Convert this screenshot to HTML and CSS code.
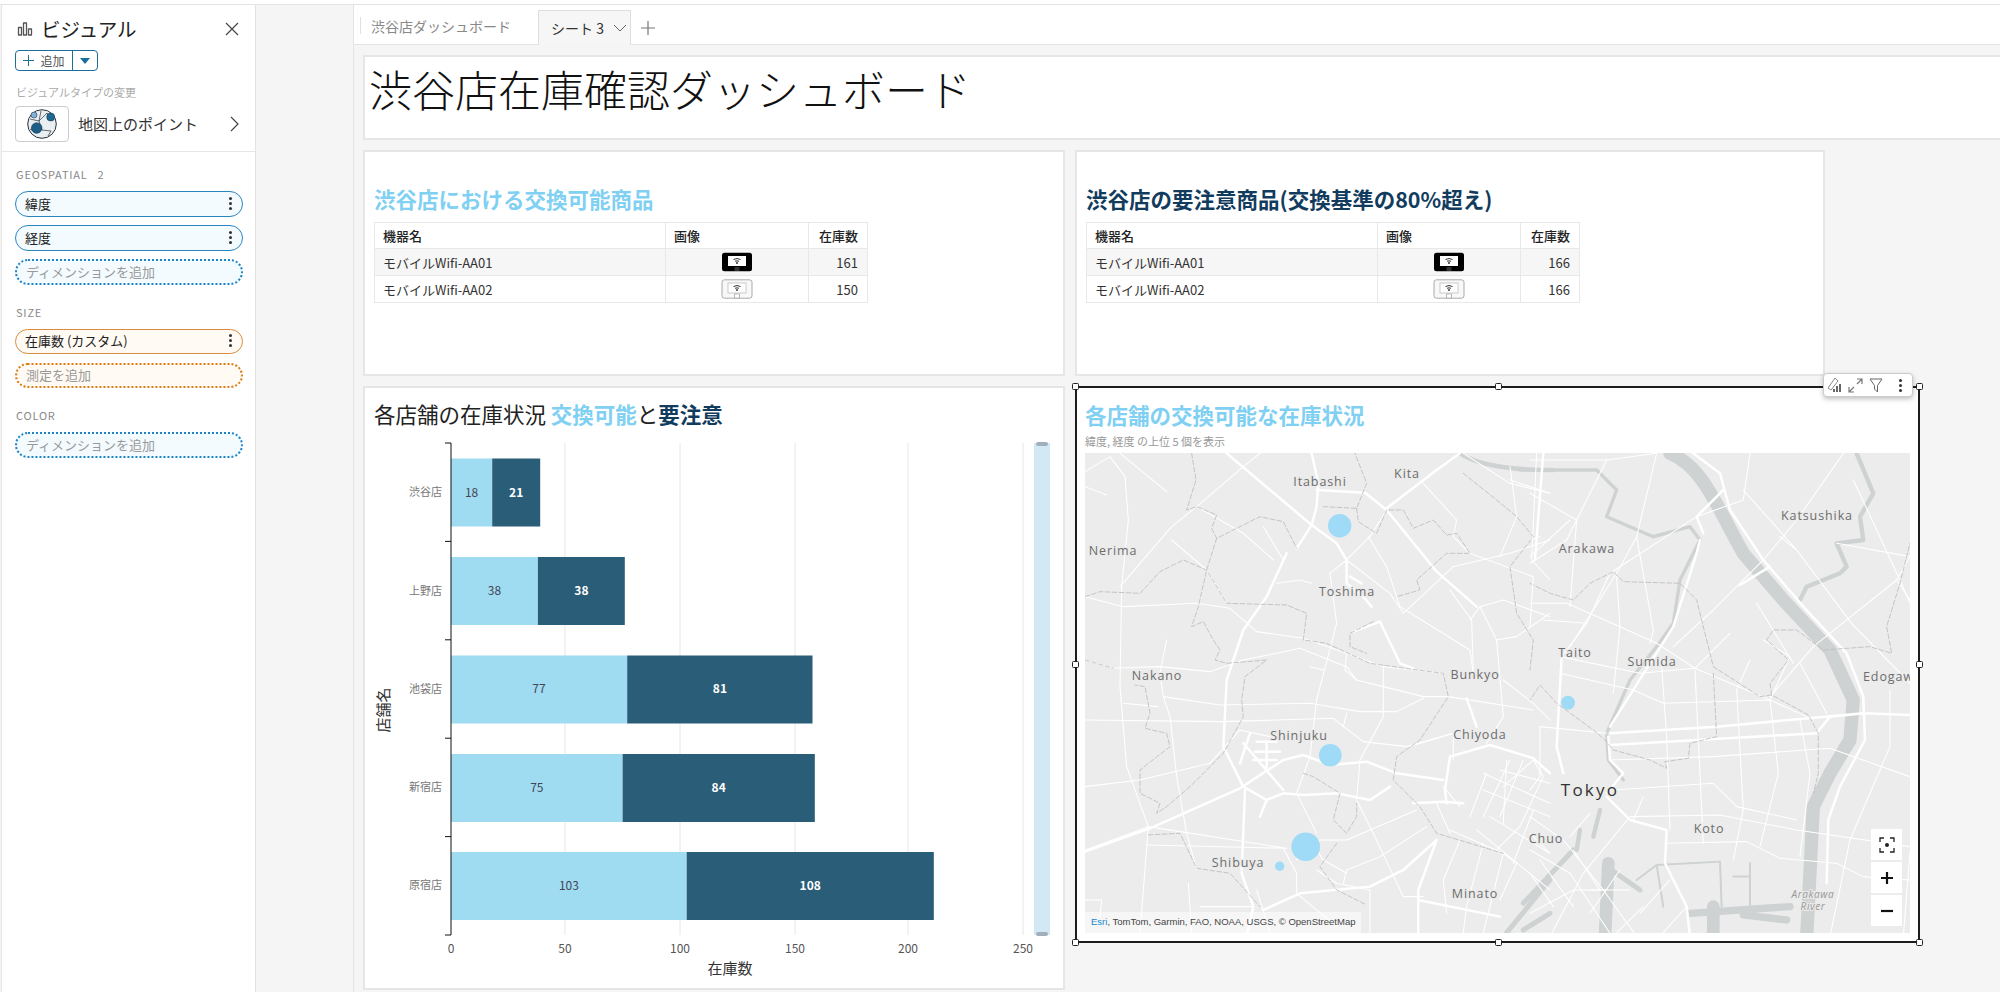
FILE: index.html
```html
<!DOCTYPE html>
<html lang="ja">
<head>
<meta charset="utf-8">
<title>渋谷店在庫確認ダッシュボード</title>
<link rel="stylesheet" href="styles.css">
</head>
<body>
<svg class="defs" width="0" height="0">
  <symbol id="device" viewBox="0 0 32 20">
    <rect x="1" y="0.8" width="30" height="18.4" rx="2.5" class="dev-body"/>
    <rect x="7" y="4" width="18" height="10" class="dev-screen"/>
    <path d="M12.5 7.5q3.5-2 7 0M14 9.3q2-1 4 0" fill="none" stroke="#333" stroke-width="1"/>
    <circle cx="16" cy="11" r="1" fill="#333"/>
    <rect x="13.5" y="15" width="5" height="4" class="dev-foot"/>
  </symbol>
</svg>
<div class="topline"></div>
<div class="app">
  <aside class="side">
    <div class="side-head">
      <svg class="ic-bars" width="16" height="14" viewBox="0 0 16 14"><path d="M1.5 5.5h3v7.500h-3zM6.500 1h3v12h-3zM11.500 7h3v6h-3z" fill="none" stroke="#555" stroke-width="1.300" stroke-linejoin="round"/></svg>
      <h2 class="side-title">ビジュアル</h2>
      <svg class="ic-close" width="14" height="14" viewBox="0 0 14 14"><path d="M1 1l12 12M13 1L1 13" stroke="#444" stroke-width="1.200"/></svg>
    </div>
    <div class="add-btn">
      <span class="add-main"><svg width="11" height="11" viewBox="0 0 11 11"><path d="M5.500 0v11M0 5.500h11" stroke="#1b6d9c" stroke-width="1"/></svg>追加</span>
      <span class="add-caret"><i></i></span>
    </div>
    <div class="side-label">ビジュアルタイプの変更</div>
    <div class="type-row">
      <span class="type-thumb">
        <svg width="32" height="32" viewBox="0 0 32 32">
          <circle cx="16" cy="16" r="14.300" fill="#e8eef1" stroke="#2b3138" stroke-width="1"/>
          <path d="M4 11l9 2 8-8M13 13l3 9 9 1M4 21l7 4M21 5l6 8M15 3l-2 10M25 23l-3 5" stroke="#2b3138" stroke-width=".7" fill="none"/>
          <circle cx="24.700" cy="9" r="4" fill="#1f6a94" stroke="#123" stroke-width=".5"/>
          <circle cx="10.700" cy="20" r="5.300" fill="#1b5e87" stroke="#123" stroke-width=".5"/>
          <circle cx="8" cy="7" r="3" fill="#7fb2d5" stroke="#335" stroke-width=".6"/>
        </svg>
      </span>
      <span class="type-name">地図上のポイント</span>
      <svg class="ic-chev" width="9" height="16" viewBox="0 0 9 16"><path d="M1 1l7 7-7 7" fill="none" stroke="#444" stroke-width="1.200"/></svg>
    </div>
    <div class="wells">
      <div class="well-label first">GEOSPATIAL&nbsp;&nbsp; 2</div>
      <div class="pill blue"><span>緯度</span><i class="kebab"></i></div>
      <div class="pill blue"><span>経度</span><i class="kebab"></i></div>
      <div class="pill blue dotted"><span>ディメンションを追加</span></div>
      <div class="well-label">SIZE</div>
      <div class="pill orange"><span>在庫数 (カスタム)</span><i class="kebab"></i></div>
      <div class="pill orange dotted"><span>測定を追加</span></div>
      <div class="well-label">COLOR</div>
      <div class="pill blue dotted"><span>ディメンションを追加</span></div>
    </div>
  </aside>
  <div class="gutter"></div>
  <main class="main">
    <nav class="tabs">
      <div class="tab">渋谷店ダッシュボード</div>
      <div class="tab active">シート 3
        <svg width="14" height="8" viewBox="0 0 14 8"><path d="M1 1l6 6 6-6" fill="none" stroke="#666" stroke-width="1"/></svg>
      </div>
      <svg class="tab-plus" width="16" height="16" viewBox="0 0 16 16"><path d="M8 1v14M1 8h14" stroke="#777" stroke-width="1.200"/></svg>
    </nav>
    <div class="sheet">
      <section class="card title-card"><h1>渋谷店在庫確認ダッシュボード</h1></section>
      <div class="row row-tables">
        <section class="card table-card w1">
          <h3 class="vt light">渋谷店における交換可能商品</h3>
          <table class="tbl">
            <colgroup><col class="c1"><col class="c2"><col class="c3"></colgroup>
            <tr><th>機器名</th><th>画像</th><th class="num">在庫数</th></tr>
            <tr class="alt"><td>モバイルWifi-AA01</td><td class="img"><svg class="dev dark" width="32" height="20"><use href="#device"/></svg></td><td class="num">161</td></tr>
            <tr><td>モバイルWifi-AA02</td><td class="img"><svg class="dev pale" width="32" height="20"><use href="#device"/></svg></td><td class="num">150</td></tr>
          </table>
        </section>
        <section class="card table-card w2">
          <h3 class="vt navy">渋谷店の要注意商品(交換基準の80%超え)</h3>
          <table class="tbl">
            <colgroup><col class="c1"><col class="c2"><col class="c3"></colgroup>
            <tr><th>機器名</th><th>画像</th><th class="num">在庫数</th></tr>
            <tr class="alt"><td>モバイルWifi-AA01</td><td class="img"><svg class="dev dark" width="32" height="20"><use href="#device"/></svg></td><td class="num">166</td></tr>
            <tr><td>モバイルWifi-AA02</td><td class="img"><svg class="dev pale" width="32" height="20"><use href="#device"/></svg></td><td class="num">166</td></tr>
          </table>
        </section>
      </div>
      <div class="row row-bottom">
        <section class="card chart-card w1">
          <h3 class="vt ink">各店舗の在庫状況 <b class="light">交換可能</b>と<b class="navy">要注意</b></h3>
          <svg class="chart" width="698" height="558" viewBox="365 430 698 558">
            <g class="grid">
              <path d="M565 443V935M680 443V935M795 443V935M908 443V935M1023 443V935"/>
            </g>
            <g class="lt">
              <rect x="451" y="458.500" width="41.200" height="68"/>
              <rect x="451" y="557" width="86.900" height="68"/>
              <rect x="451" y="655.500" width="176.200" height="68"/>
              <rect x="451" y="754" width="171.600" height="68"/>
              <rect x="451" y="852" width="235.700" height="68"/>
            </g>
            <g class="dk">
              <rect x="492.200" y="458.500" width="48" height="68"/>
              <rect x="537.900" y="557" width="86.900" height="68"/>
              <rect x="627.200" y="655.500" width="185.300" height="68"/>
              <rect x="622.600" y="754" width="192.200" height="68"/>
              <rect x="686.700" y="852" width="247.100" height="68"/>
            </g>
            <path class="axis" d="M451 443V935M445 443h6M445 541.400h6M445 639.800h6M445 738.200h6M445 836.600h6M445 935h6"/>
            <g class="cat">
              <text x="442" y="496">渋谷店</text>
              <text x="442" y="595">上野店</text>
              <text x="442" y="693">池袋店</text>
              <text x="442" y="791">新宿店</text>
              <text x="442" y="889">原宿店</text>
            </g>
            <g class="val">
              <text x="471.600" y="497">18</text>
              <text x="494.500" y="595">38</text>
              <text x="539" y="693">77</text>
              <text x="536.800" y="792">75</text>
              <text x="568.900" y="890">103</text>
            </g>
            <g class="val on-dark">
              <text x="516.200" y="497">21</text>
              <text x="581.400" y="595">38</text>
              <text x="719.900" y="693">81</text>
              <text x="718.700" y="792">84</text>
              <text x="810.200" y="890">108</text>
            </g>
            <g class="tick">
              <text x="451" y="953">0</text>
              <text x="565" y="953">50</text>
              <text x="680" y="953">100</text>
              <text x="795" y="953">150</text>
              <text x="908" y="953">200</text>
              <text x="1023" y="953">250</text>
            </g>
            <text class="ax-title" x="730" y="974">在庫数</text>
            <text class="ax-title" transform="translate(389 710) rotate(-90)">店舗名</text>
            <rect class="scroll" x="1034" y="443" width="16" height="492"/>
            <rect class="grip" x="1036" y="442" width="12" height="4" rx="2"/>
            <rect class="grip" x="1036" y="932" width="12" height="4" rx="2"/>
          </svg>
        </section>
        <section class="card map-card">
          <h3 class="vt light">各店舗の交換可能な在庫状況</h3>
          <p class="sub">緯度, 経度 の上位 5 個を表示</p>
          <div class="map">
            <svg class="map-svg" width="825" height="480" viewBox="0 0 825 480">
              <rect width="825" height="480" fill="#ececec"/>
              <g transform="translate(445 -13) scale(.3333)">
                <g class="water">
                  <path class="w40" d="M420 40C520 80 560 200 640 340L760 480L900 630L970 780L960 900L900 1000L850 1100L840 1300L830 1490"/>
                  <path class="w12" d="M-30 90L200 90L260 150L230 230L370 290L480 260L510 300L450 420L430 550L380 620L300 720L230 880L235 960L280 1020"/>
                  <path class="w14" d="M810 480L830 440L930 400L950 380L920 310L1000 300L990 230L1030 160L980 40"/>
                  <path class="w16" d="M-70 1478L60 1320M-20 1390L130 1230M230 1280L330 1350M-20 1470L60 1420"/>
                  <path class="w30" d="M480 1420L780 1400M640 1425L770 1440"/>
                  <path class="w50" d="M550 1400V1490M235 1270L225 1490"/>
                  <path class="w8" d="M320 1320L380 1275L570 1265L575 1400M660 1270V1400M610 1310H660M380 1275L400 1400"/>
                  <path class="w14" d="M210 1110L190 1190M150 1170L140 1230"/>
                </g>
                <g class="road-m">
                  <path d="M240 880L560 860L1000 820L1140 825M240 915L860 880L900 830L1000 820"/>
                  <path d="M95 650L80 920L100 1000M235 890L240 960L280 1000L230 1060"/>
                  <path d="M230 1070L300 1140L410 1170L405 1270L470 1400L480 1490"/>
                  <path d="M510 300L500 340L430 560L240 860"/>
                  <path d="M490 40L570 100L600 210L700 360L820 500L950 640L1000 770L1005 900L930 1040L895 1140L890 1330"/>
                  <path d="M580 150L500 230L520 280M720 380L630 435"/>
                </g>
                <g class="road-t">
                  <path d="M0 60L230 60L380 40M380 40L320 290L260 400L120 620M0 370L110 300L230 60"/>
                  <path d="M0 160L140 240L120 500M0 300L30 290M120 240L0 350"/>
                  <path d="M660 40L640 180L500 230L240 400L170 550L95 650M940 40L800 240L700 360L550 510L430 620"/>
                  <path d="M970 120L1110 420L1140 490M1140 350L1100 420L850 620L720 770"/>
                  <path d="M920 310L1140 350M640 150L800 330L965 550L1140 730M750 290L800 330"/>
                  <path d="M0 490L110 490L270 560L380 610L495 685L720 780M40 540L170 550M495 685L330 700L90 650"/>
                  <path d="M260 410L270 560L250 760M320 290L370 570L360 610"/>
                  <path d="M90 700L310 750L400 790L720 780L830 830M30 860L230 880"/>
                  <path d="M395 680L410 890L420 1170M495 690L520 1210M620 750L640 1110L610 1260"/>
                  <path d="M660 660L620 750M600 580L495 685M680 490L790 670M700 600L780 650L720 780"/>
                  <path d="M810 670L890 820M720 780L745 1000L690 1220M810 840L840 1000L810 1250"/>
                  <path d="M240 960L550 950L900 925L1140 1010M1080 750L1080 920L960 1200L900 1490"/>
                  <path d="M250 1050L550 1030L620 1100L800 1140M300 1130L570 1125L800 1170L1140 1220"/>
                  <path d="M410 1210L650 1205L750 1255L920 1270L1000 1310L1140 1320M1140 480L1100 420M1140 1240L1120 1490"/>
                  <path d="M0 1130L100 1200L220 1350L320 1490M0 1230L120 1300L240 1480M300 1130L160 1300L60 1490M0 1420L130 1350L230 1350"/>
                  <path d="M130 1230L210 1350M340 1070L310 1140M180 1120L120 1190M30 1010L0 1050M30 860L30 1010"/>
                  <path d="M0 1300L70 1400M30 1260L130 1400M180 1350L300 1350M270 1290L180 1420M340 1400L260 1478M420 1320L330 1420M470 1400L400 1478M0 1180L60 1240"/>
                </g>
                <path class="bound" d="M0 430L60 460L130 480L180 430L250 395L280 425L450 430L500 480L550 680L690 770L725 765L835 825L865 880L865 1000L850 1060M550 700L560 890L480 910L475 955L405 965L410 985L360 960L250 930L225 900L190 870L80 790L30 735L0 780M725 765L720 730L775 660L710 600L730 570L800 570L880 630L1020 620L1085 640L1070 560L1110 430L1140 310"/>
              </g>
              <g transform="translate(-15 -13) scale(.3333)">
                <path class="water w14" d="M1170 40C1230 80 1340 90 1450 90"/>
                <g class="road-t">
                  <path d="M45 95L120 50M120 50L165 110L175 240L155 440L150 740L170 980L235 1160L210 1478M150 40L290 155M45 140L110 165"/>
                  <path d="M150 440L305 260L380 200L520 80L570 40M380 200L520 280L610 360M305 300L410 390L470 490M640 360L580 260M620 430L690 420L725 430"/>
                  <path d="M45 470L160 500L380 490L480 505L560 575L700 595L830 640L940 680L1120 700M290 600L270 700L280 770L300 830L320 1010L350 1180L380 1290"/>
                  <path d="M45 660L130 685L270 680L420 695L520 660L620 640L690 625L830 680L860 720L940 740L1060 770L1135 770L1390 810"/>
                  <path d="M280 770L450 795L720 790L870 815L980 815L1060 775M160 790L265 800M45 840L460 845L620 840L790 835L880 905L1010 920L1150 880L1150 960"/>
                  <path d="M45 1040L210 1020L420 970L510 870L600 890M45 1230L235 1160L650 1225M230 1215L650 1225M720 1200L760 1260L830 1300"/>
                  <path d="M780 400L800 550L740 780L720 950L680 1060L740 1180M940 680V830L870 960L860 1080L910 1180L1000 1370M830 640L825 690L860 720"/>
                  <path d="M895 290L950 380L990 500L1200 630L1210 700M720 680L760 690M830 820L820 860M1060 130L1160 240L1150 290L1200 340L1390 410L1380 560"/>
                  <path d="M830 360L900 290L950 210M780 400L830 360L960 460L1000 520L1150 380L1320 340L1440 300M1200 540L1230 500L1300 480L1440 530"/>
                  <path d="M1230 500L1280 600L1300 830L1250 910M1140 450L1205 540L1210 690M1320 80L1340 230L1290 350M1400 40L1385 360L1440 420M1180 40L1320 130L1440 160"/>
                  <path d="M1280 600L1340 590L1440 520M1300 720L1390 790L1440 840M1320 120L1440 160"/>
                  <path d="M640 1225L680 1300L680 1360L800 1460M820 1330L830 1290L930 1250L1070 1160M680 1260L750 1200L830 1200L1040 1110M740 1290L800 1330L900 1350L900 1478"/>
                  <path d="M355 1330L365 1478M45 1380H95L90 1430M390 1400L550 1400M560 1350L600 1478M1000 1370L1060 1370"/>
                  <path d="M1140 1170L1300 1240L1340 1270L1290 1380M1170 1200L1120 1320L1130 1420M1240 1210L1190 1400L1180 1478M1300 1240L1240 1478"/>
                  <path d="M1260 1130L1440 1240M1220 1170L1440 1350M1300 1040L1390 960L1420 1010L1350 1160L1280 1230M1390 1110L1330 1270"/>
                  <path d="M1150 880L1035 915M1240 1050L1440 1130M1240 1000L1440 1090M1290 990L1440 1030M1360 960L1290 1130M1320 960L1240 1130"/>
                </g>
                <g class="road-m">
                  <path d="M725 40L745 130L740 200L725 255L680 325M740 150L885 158L950 210L1100 395L1220 500"/>
                  <path d="M470 40L725 255L800 310L830 360L830 430L880 470L905 500M950 205L1100 90L1170 40M1420 40L1395 360"/>
                  <path d="M650 340L590 470L520 570L470 720L460 920L520 1040L590 1080L640 1060L700 1065L800 1060L900 1080L960 1040M590 1080L570 1130"/>
                  <path d="M45 1235L240 1165L510 1045L640 960L700 945L780 975L890 965L980 1000L1120 1020"/>
                  <path d="M850 575L930 545L990 670L1030 685M1190 775L1220 860M840 410L875 430"/>
                  <path d="M1140 950L1260 915L1390 955L1440 1000M1030 1090L1120 1085L1180 1090M1140 950L1125 1050L1130 1090"/>
                  <path d="M580 1410L690 1360L900 1340L1000 1290L1100 1200M1045 1490L1045 1350L1100 1200"/>
                  <path d="M525 1050L515 1300L550 1400L530 1490M1045 1380L1290 1430"/>
                  <path d="M520 910L640 1050M540 880L510 970M560 905L620 905M555 935L630 935M550 960L620 960M590 905V980"/>
                </g>
                <g class="road-t">
                  <path d="M1310 960L1300 1150M1250 1000L1200 1130M1100 1090L1140 1180M1120 1040L1170 1100"/>
                </g>
                <path class="bound" d="M365 40L378 120L350 210L380 200L440 225L425 265L440 295L570 230L640 245L680 325M440 295L410 390L385 500L365 560L400 545L430 600L450 630L435 660L470 670L590 660L525 710L515 780L520 830L460 940L360 1040L290 1100L260 1120L270 1090L210 1060L210 990L300 920L290 880L225 865L240 820L225 740L195 735M45 470L90 455L210 460L270 395L340 360L410 390L470 490L650 495L710 520L700 600L770 610L900 670L1040 690L1120 700L1135 770L1050 900L980 950L970 1020L1050 1100L1100 1180L1300 1240M235 1185L330 1180L380 1285L480 1300L570 1400M45 660L130 685M760 200L860 205L890 130L855 40M860 205L865 245L920 280L950 210L1000 210L1030 265L1090 240L1130 285L1160 280L1200 340L1130 340L1040 420L1050 450L980 470M910 545L840 580L840 620L890 640M1180 100L1280 180L1340 230L1390 290L1320 380L1340 520L1390 600L1380 690M700 1000L730 1010L810 1060L790 1140L830 1180L860 1130L860 1090M800 1210L750 1280L800 1350L890 1395"/>
              </g>
              <g class="pins">
                <circle cx="254.700" cy="72.700" r="11.700"/>
                <circle cx="245.300" cy="302.300" r="11.300"/>
                <circle cx="220.700" cy="393.700" r="14.300"/>
                <circle cx="194.700" cy="413.300" r="4.700"/>
                <circle cx="483" cy="249.700" r="7"/>
              </g>
              <g class="place">
                <text x="235" y="33">Itabashi</text>
                <text x="322" y="25">Kita</text>
                <text x="28" y="102">Nerima</text>
                <text x="262" y="143">Toshima</text>
                <text x="72" y="227">Nakano</text>
                <text x="390" y="226">Bunkyo</text>
                <text x="214" y="287">Shinjuku</text>
                <text x="395" y="286">Chiyoda</text>
                <text x="153" y="414">Shibuya</text>
                <text x="390" y="445">Minato</text>
                <text x="732" y="67">Katsushika</text>
                <text x="502" y="100">Arakawa</text>
                <text x="490" y="204">Taito</text>
                <text x="567" y="213">Sumida</text>
                <text class="edge" x="778" y="228">Edogawa</text>
                <text x="624" y="380">Koto</text>
                <text x="461" y="390">Chuo</text>
                <text class="big" x="505" y="343">Tokyo</text>
                <text class="river" x="728" y="445">Arakawa</text>
                <text class="river" x="728" y="457">River</text>
              </g>
            </svg>
            <div class="attrib"><span>Esri</span>, TomTom, Garmin, FAO, NOAA, USGS, © OpenStreetMap</div>
            <div class="map-ctrl">
              <button class="mbtn"><svg width="16" height="16" viewBox="0 0 16 16"><path d="M1 5V1h4M11 1h4v4M15 11v4h-4M5 15H1v-4" fill="none" stroke="#222" stroke-width="1.300"/><circle cx="8" cy="8" r="2" fill="#222"/></svg></button>
              <button class="mbtn"><svg width="12" height="12" viewBox="0 0 12 12"><path d="M6 0v12M0 6h12" stroke="#111" stroke-width="2.200"/></svg></button>
              <button class="mbtn"><svg width="12" height="4" viewBox="0 0 12 4"><path d="M0 2h12" stroke="#111" stroke-width="2.200"/></svg></button>
            </div>
          </div>
          <i class="h tl"></i><i class="h tm"></i><i class="h tr"></i>
          <i class="h ml"></i><i class="h mr"></i>
          <i class="h bl"></i><i class="h bm"></i><i class="h br"></i>
          <div class="toolbar">
            <svg width="15" height="16" viewBox="0 0 15 16"><path d="M1 11L8 1l3 3-7 9z" fill="none" stroke="#888" stroke-width="1"/><path d="M6 15h2v-3H6zM9 15h2V9H9zM12 15h2V7h-2z" fill="#666"/></svg>
            <svg width="15" height="15" viewBox="0 0 15 15"><path d="M9 1h5v5M14 1L9 6M1 9v5h5M1 14l5-5" fill="none" stroke="#777" stroke-width="1.200"/></svg>
            <svg width="14" height="15" viewBox="0 0 14 15"><path d="M1 1h12L8.500 7.500V14L5.500 11V7.500z" fill="none" stroke="#666" stroke-width="1"/></svg>
            <i class="kebab"></i>
          </div>
        </section>
      </div>
    </div>
  </main>
</div>
</body>
</html>
```
FILE: styles.css
```css
* { box-sizing: border-box; }
html, body { margin: 0; padding: 0; }
body {
  width: 2000px; height: 992px; overflow: hidden;
  background: #f5f5f5; color: #222;
  font-family: "Noto Sans CJK JP", "Noto Sans", sans-serif;
}
.defs { position: absolute; }
.topline { height: 5px; background: #fff; border-bottom: 1px solid #e4e4e4; }
.app { display: flex; height: 987px; }

/* sidebar */
.side { width: 255px; margin-left: 1px; background: #fff; border-left: 1px solid #e6e6e6; border-right: 1px solid #e2e2e2; flex: none; }
.side-head { display: flex; align-items: center; height: 45px; padding: 2px 16px 0 15px; }
.ic-bars { margin-right: 8px; }
.side-title { margin: 0; flex: 1; font-size: 19.500px; font-weight: 400; line-height: 26px; color: #222; }
.add-btn { display: flex; width: 83px; height: 21px; margin-left: 13px; border: 1px solid #1b6d9c; border-radius: 4px; color: #555; font-size: 12px; }
.add-main { display: flex; align-items: center; justify-content: center; gap: 6px; width: 57px; border-right: 1px solid #1b6d9c; line-height: 1; }
.add-caret { flex: 1; display: flex; align-items: center; justify-content: center; }
.add-caret i { border: 5.5px solid transparent; border-top: 6px solid #1b6d9c; border-bottom: 0; }
.side-label { margin: 13px 0 0 14px; height: 16px; font-size: 11px; line-height: 16px; color: #aaa; }
.type-row { display: flex; align-items: center; height: 36px; margin: 6px 0 0 13px; }
.type-thumb { display: flex; align-items: center; justify-content: center; width: 54px; height: 36px; border: 1px solid #ccc; border-radius: 4px; }
.type-name { margin-left: 9px; width: 152px; font-size: 15px; line-height: 20px; color: #333; }
.wells { margin-top: 9px; padding: 0 12px 0 13px; border-top: 1px solid #e6e6e6; }
.well-label { height: 16px; margin-top: 19px; margin-bottom: 9px; font-size: 11px; line-height: 16px; letter-spacing: .8px; color: #888; padding-left: 1px; }
.well-label.first { margin-top: 14px; }
.pill { display: flex; align-items: center; justify-content: space-between; height: 26px; margin-bottom: 8px; padding: 0 10px 2px 9px; border-radius: 13px; font-size: 13px; line-height: 1; }
.pill.blue { border: 1.5px solid #2a85bf; background: #f3fbff; }
.pill.orange { height: 25px; margin-bottom: 9px; border: 1.5px solid #d98c3e; background: #fffaf3; }
.pill.dotted { border-style: dotted; border-width: 2px; color: #999; font-size: 13px; }
.pill.blue.dotted { border-color: #1f84c6; }
.pill.orange.dotted { border-color: #d97d14; }
.kebab { display: block; width: 3px; height: 3px; border-radius: 50%; background: #333; box-shadow: 0 -5px 0 #333, 0 5px 0 #333; }

.gutter { width: 97px; flex: none; }

/* main */
.main { flex: 1; min-width: 0; border-left: 1px solid #e4e4e4; }
.tabs { display: flex; align-items: flex-end; height: 40px; background: #fff; border-bottom: 1px solid #e4e4e4; }
.tab { width: 178px; margin-left: 6px; height: 34px; padding-left: 11px; font-size: 14px; line-height: 33px; color: #888; position: relative; }
.tab::before { content: ""; position: absolute; left: 0; top: 7px; height: 17px; border-left: 1px solid #e0e0e0; }
.tab.active::before { display: none; }
.tab.active { display: flex; align-items: center; width: 93px; margin: 0 0 -1px; height: 35px; padding: 0 0 0 12px; border: 1px solid #ddd; border-bottom: 0; background: #f6f6f6; color: #333; gap: 9px; white-space: nowrap; }
.tab-plus { margin: 0 0 8px 9px; }
.sheet { display: flex; flex-direction: column; gap: 10px; padding: 10px 0 0 9px; }
.card { background: #fff; border: 2px solid #e6e6e6; }
.title-card { height: 85px; border-right: 0; padding: 0 0 0 4px; }
.title-card h1 { margin: 5px 0 0; font-size: 43px; font-weight: 300; line-height: 52px; color: #111; }
.row { display: flex; gap: 10px; align-items: flex-start; }
.w1 { width: 702px; }
.w2 { width: 750px; }
.table-card { height: 226px; padding: 32px 0 0 9px; }
.vt { margin: 0; font-size: 21.500px; font-weight: 700; line-height: 30px; white-space: nowrap; }
.light { color: #7fd0f2; }
.navy { color: #123c5e; }
.ink { color: #222; font-weight: 400; }
.ink b { font-weight: 700; }
.tbl { margin-top: 8px; width: 493px; border-collapse: collapse; table-layout: fixed; font-size: 13px; }
.c1 { width: 291px; } .c2 { width: 143px; } .c3 { width: 59px; }
.tbl th, .tbl td { border: 1px solid #e8e8e8; padding: 0 9px 0 8px; text-align: left; height: 27px; line-height: 1; }
.tbl th { font-weight: 500; color: #222; height: 26px; }
.tbl td { color: #333; }
.tbl .num { text-align: right; }
.tbl .img { text-align: center; padding: 0; }
.tbl .alt td { background: #f6f6f6; }
.dev { display: block; margin: 0 auto; }
.dev-body { fill: var(--dev-body); stroke: var(--dev-line); stroke-width: 1; }
.dev-screen { fill: #fff; stroke: var(--dev-line); stroke-width: .6; }
.dev-foot { fill: var(--dev-foot); stroke: var(--dev-line); stroke-width: .8; }
.dev.dark { --dev-body: #000; --dev-foot: #333; --dev-line: transparent; }
.dev.pale { --dev-body: #f8f8f8; --dev-foot: #fff; --dev-line: #aaa; }

.chart-card { height: 604px; padding-top: 11px; }
.chart-card .vt { padding-left: 9px; height: 31px; }
.chart { display: block; }
.chart text { font-family: "Noto Sans CJK JP", "Noto Sans", sans-serif; text-anchor: middle; }
.grid path { stroke: #e6e6e6; stroke-width: 1; fill: none; }
.lt rect { fill: #9fdcf1; }
.dk rect { fill: #2a5d78; }
.axis { stroke: #111; stroke-width: 1; fill: none; }
.chart .cat text { font-size: 11px; fill: #777; text-anchor: end; }
.chart .val text { font-size: 12px; fill: #445; }
.chart .val.on-dark text { fill: #fff; font-weight: 700; }
.chart .tick text { font-size: 12px; fill: #555; }
.chart .ax-title { font-size: 15px; fill: #333; }
.scroll { fill: #d2e9f5; }
.grip { fill: #9fb0bb; }

.map-card { position: relative; width: 845px; height: 557px; padding: 12px 8px 0; border-color: #1c1c1c; }
.map-card .vt { height: 30px; }
.sub { margin: 3px 0 4px; height: 16px; font-size: 11px; line-height: 16px; color: #999; }
.map { position: relative; width: 825px; height: 480px; overflow: hidden; }
.map-svg { display: block; }
.water path, .water, .road-t path, .road-m path, .bound { fill: none; stroke-linejoin: round; stroke-linecap: round; }
.w40 { stroke: #cfd2d2; stroke-width: 40; }
.w12 { stroke: #cfd2d2; stroke-width: 10; }
.w14 { stroke: #cfd2d2; stroke-width: 13; }
.w16 { stroke: #cfd2d2; stroke-width: 15; }
.w30 { stroke: #cfd2d2; stroke-width: 22; }
.w50 { stroke: #cfd2d2; stroke-width: 38; }
.w8 { stroke: #cfd2d2; stroke-width: 6; }
.road-t path { stroke: #fff; stroke-width: 3.200; }
.road-m path { stroke: #fff; stroke-width: 7.500; }
.bound { stroke: #bcbcbc; stroke-width: 2.500; stroke-dasharray: 14 7; }
.pins circle { fill: #9fdaf6; }
.place text { font-family: "Open Sans", "Noto Sans", sans-serif; font-size: 12.500px; letter-spacing: .9px; fill: #6d6d6d; text-anchor: middle; paint-order: stroke; stroke: #ebebeb; stroke-width: 2px; }
.place .edge { text-anchor: start; }
.place .big { font-size: 17px; letter-spacing: 2.200px; fill: #333; }
.place .river { font-size: 10px; font-style: italic; fill: #999; letter-spacing: .6px; }
.attrib { position: absolute; left: 0; bottom: 0; padding: 3px 6px 4px; background: rgba(255,255,255,.55); font-family: "Liberation Sans", Arial, sans-serif; font-size: 9.500px; line-height: 14px; color: #444; white-space: nowrap; }
.attrib span { color: #1a87d0; }
.map-ctrl { position: absolute; right: 8px; bottom: 7px; display: flex; flex-direction: column; gap: 2px; }
.mbtn { display: flex; align-items: center; justify-content: center; width: 31px; height: 31px; padding: 0; border: 0; background: #fff; }
.h { position: absolute; width: 7px; height: 7px; background: #fff; border: 1px solid #222; border-radius: 1.500px; }
.tl { left: -5px; top: -5px; } .tm { left: 418px; top: -5px; } .tr { right: -5px; top: -5px; }
.ml { left: -5px; top: 273px; } .mr { right: -5px; top: 273px; }
.bl { left: -5px; bottom: -5px; } .bm { left: 418px; bottom: -5px; } .br { right: -5px; bottom: -5px; }
.toolbar { position: absolute; left: 746px; top: -15px; display: flex; align-items: center; gap: 6px; width: 90px; height: 24px; padding: 0 0 0 3px; background: #fff; border: 1px solid #ccc; border-radius: 4px; box-shadow: 0 2px 5px rgba(0,0,0,.25); }
.toolbar .kebab { margin-left: 10px; }
```
